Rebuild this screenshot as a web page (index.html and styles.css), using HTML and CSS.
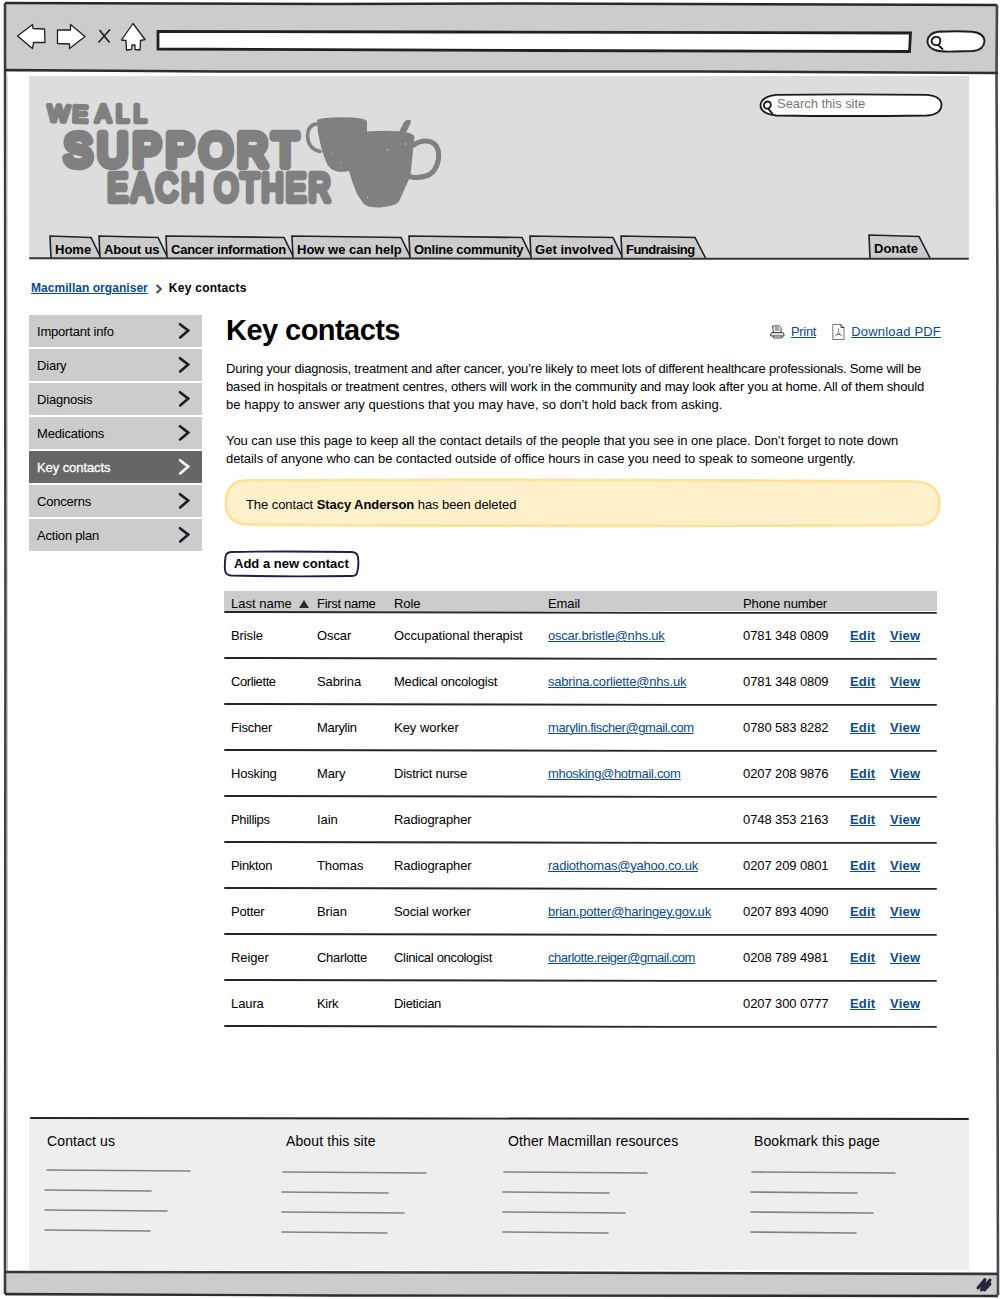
FILE: index.html
```
<!DOCTYPE html>
<html lang="en">
<head>
<meta charset="utf-8">
<title>Key contacts</title>
<link rel="stylesheet" href="styles.css">
</head>
<body>
<svg width="0" height="0" class="defs">
  <symbol id="chev" viewBox="0 0 12 18"><path d="M2 2.2L10.300 8.600L2.200 15.400" fill="none" stroke="currentColor" stroke-width="2.600" stroke-linecap="round"/></symbol>
  <symbol id="glass" viewBox="0 0 13 14"><path d="M5.500 1.600C8 1 9.600 3 9.200 5.400C8.800 7.600 7 8.600 5.200 8.300C3 8 1.800 6.300 2.100 4.500C2.400 2.800 3.500 2 5.500 1.600M7.500 8.300L11 11.500" fill="none" stroke="#16161c" stroke-width="1.500" stroke-linecap="round"/></symbol>
  <symbol id="rule" viewBox="0 0 713 4" preserveAspectRatio="none"><path d="M1 1L150 1.300L450 1.900L712 1.900" fill="none" stroke="#25262e" stroke-width="1.900" stroke-linecap="round"/></symbol>
</svg>
<div class="window">
  <svg class="frame" viewBox="0 0 1000 1299" fill="none">
    <path d="M5 3L330 4L520 3.500L997 5" stroke="#25282c" stroke-width="2.400"/>
    <path d="M5 3L5.500 600L5 1294" stroke="#3a3c42" stroke-width="2.600"/>
    <path d="M7 75L7.500 1271" stroke="#b9b9c4" stroke-width="1"/>
    <path d="M997 5L996.500 72L997.500 300L997 800L998 1295" stroke="#45474c" stroke-width="2.600"/>
    <path d="M4 70L220 71.500L700 71.500L998 73" stroke="#2b2d30" stroke-width="2.600"/>
    <path d="M5 1272L500 1272.500L998 1274" stroke="#34363c" stroke-width="2.600"/>
    <path d="M5 1294L330 1295.500L998 1296" stroke="#2b2d33" stroke-width="2.400"/>
    <path d="M978 1288L985 1279.500L981.500 1290L990 1280L984.500 1290L990 1284" stroke="#25253a" stroke-width="3" stroke-linejoin="round" stroke-linecap="round"/>
  </svg>

  <div class="toolbar">
    <svg class="nav-icons" width="140" height="40" viewBox="0 0 140 40" fill="#fff" stroke="#1f2024" stroke-width="1.300" stroke-linejoin="round">
      <path d="M2.500 18L17.500 6.500L18 10.500L29.500 11L30 24.500L18.500 24.500L17.500 30.500Z"/>
      <path d="M42.500 12L55.500 12L55.500 6.500L70 18.500L54.500 30.500L54.500 26L42.500 25.500Z"/>
      <path d="M84.500 12L94.500 24.500M95 11.500L83.500 24.500" fill="none" stroke-width="1.700"/>
      <path d="M106.500 22L118 5.500L130 21.500L125.500 22.500L125 32L120 31.500L120 27L117 27L116.500 31.500L111.500 32L111 22.500Z"/>
    </svg>
    <svg class="address" width="756" height="24" viewBox="0 0 756 24"><path d="M2 2.500L300 3L754.500 4L753.500 22.500L380 21.500L2 20Z" fill="#fff" stroke="#1f2026" stroke-width="2.800"/></svg>
    <div class="mini-search">
      <svg class="pill" width="60" height="23" viewBox="0 0 60 23"><path d="M12 1.800Q32 .8 46 1.800Q58 3 58.500 11Q58 20 47 21L28 21.500Q15 22 9 20Q1 17 1.500 10.500Q3 3 12 1.800Z" fill="#fff" stroke="#1b1c22" stroke-width="1.900"/></svg>
      <svg class="mag" width="16" height="17"><use href="#glass"/></svg>
    </div>
  </div>

  <div class="page">
    <header class="masthead">
      <div class="brand-row">
        <svg class="logo" width="400" height="112" viewBox="44 98 400 112" fill="#808080" stroke="#808080" stroke-linejoin="round" stroke-linecap="round">
          <g class="lettering">
            <text x="47.500" y="121" font-size="23" stroke-width="4.500" textLength="40" transform="rotate(2 48 121)">WE</text>
            <text x="95.500" y="122" font-size="23" stroke-width="4.500" textLength="51">ALL</text>
            <text transform="translate(64 165.500) scale(.9 1)" font-size="47" stroke-width="8.500" textLength="260">SUPPORT</text>
            <text transform="translate(107.500 201) scale(.8 1)" font-size="38" stroke-width="6.500" textLength="120">EACH</text>
            <text transform="translate(214.500 201) scale(.8 1)" font-size="38" stroke-width="6.500" textLength="145">OTHER</text>
          </g>
          <path stroke="none" d="M317 120Q322 117.500 341 117.300Q364 117.500 367 121L367 131.500Q392 129.500 407 132.500Q414 134 414.500 137L412 160L410.500 176L405 188L399 201.500Q396 206 380 207.500Q366 207.500 363 203L357 194L352 181L349 171Q330 175 325.500 160L322 151L318 133Z"/>
          <path fill="none" stroke-width="3.500" d="M317 124Q308 124.500 307.500 136Q308 149 320 151.500"/>
          <path fill="none" stroke-width="5" d="M414 145Q421 139.500 430 141.500Q440 145 438.500 159Q436 173 426 176Q418 178.500 411 177"/>
          <path stroke="none" d="M399 132L404 122Q408 118.500 411 120.500Q411.500 122 406 132.500Z"/>
          <g fill="#ddd" stroke="none"><circle cx="387.500" cy="150" r=".8"/><circle cx="405.500" cy="144" r=".7"/><circle cx="341" cy="162.500" r=".6"/><circle cx="333" cy="153" r=".5"/><circle cx="367.500" cy="197.500" r=".6"/></g>
        </svg>
        <div class="site-search">
          <svg class="pill" width="184" height="25" viewBox="0 0 184 25"><path d="M17 1.800Q90 .8 168 1.800Q182.500 3 182.500 12Q182 21.500 168 22.500Q90 23.500 17 22.500Q1.500 20.500 1.500 12.500Q2 3.500 17 1.800Z" fill="#fff" stroke="#1b1c22" stroke-width="1.800"/></svg>
          <svg class="mag" width="15" height="17" viewBox="0 0 13 15"><path d="M6.500 2.200C9.200 2 10 4.500 9 6.800C8 9 5 9 3.800 7.500C2.500 5.500 3.500 2.500 6.500 2.200M7.300 8.700L10.600 12.700" fill="none" stroke="#16161c" stroke-width="1.600" stroke-linecap="round"/></svg>
          <span>Search this site</span>
        </div>
      </div>
      <nav class="tabs">
        <a class="tab t1"><svg viewBox="0 0 52 24"><path d="M2 23L1 1L42 2.500L52 23"/></svg><span>Home</span></a>
        <a class="tab t2"><svg viewBox="0 0 70 24"><path d="M2 23L1 1L60 2.500L70 23"/></svg><span>About us</span></a>
        <a class="tab t3"><svg viewBox="0 0 129 24"><path d="M2 23L1 1L119 2.500L129 23"/></svg><span>Cancer information</span></a>
        <a class="tab t4"><svg viewBox="0 0 120 24"><path d="M2 23L1 1L110 2.500L120 23"/></svg><span>How we can help</span></a>
        <a class="tab t5"><svg viewBox="0 0 124 24"><path d="M2 23L1 1L114 2.500L124 23"/></svg><span>Online community</span></a>
        <a class="tab t6"><svg viewBox="0 0 94 24"><path d="M2 23L1 1L84 2.500L94 23"/></svg><span>Get involved</span></a>
        <a class="tab t7"><svg viewBox="0 0 86 24"><path d="M2 23L1 1L75 2.500L85.500 23"/></svg><span>Fundraising</span></a>
        <a class="tab donate"><svg viewBox="0 0 64 24"><path d="M2 24L1 1L51 2.500L62 24"/></svg><span>Donate</span></a>
      </nav>
      <svg class="tabline" width="940" height="3" viewBox="0 0 940 3"><path d="M1 1.200L400 1.600L939 1.800" stroke="#33343c" stroke-width="2" stroke-linecap="round"/></svg>
    </header>

    <div class="crumbs"><a class="link">Macmillan organiser</a><svg width="8" height="10" viewBox="0 0 8 10"><path d="M1.500 1L6 5L1.500 9" fill="none" stroke="#444650" stroke-width="1.900"/></svg><span>Key contacts</span></div>

    <div class="columns">
      <nav class="side">
        <a>Important info<svg width="12" height="18"><use href="#chev"/></svg></a>
        <a>Diary<svg width="12" height="18"><use href="#chev"/></svg></a>
        <a>Diagnosis<svg width="12" height="18"><use href="#chev"/></svg></a>
        <a>Medications<svg width="12" height="18"><use href="#chev"/></svg></a>
        <a class="current">Key contacts<svg width="12" height="18"><use href="#chev"/></svg></a>
        <a>Concerns<svg width="12" height="18"><use href="#chev"/></svg></a>
        <a>Action plan<svg width="12" height="18"><use href="#chev"/></svg></a>
      </nav>

      <main>
        <div class="title-row">
          <h1>Key contacts</h1>
          <div class="actions">
            <svg width="15" height="14" viewBox="0 0 15 14" fill="none" stroke="#43454b" stroke-width="1"><path d="M3.500 7L2.500 1L9 .8L11 2.500L11 7M4.500 3H9M5 5H9.500"/><path d="M1.500 7.500H13L14 9.500V11H.8V9Z" fill="#ddd"/><path d="M3.500 11V13H12V11"/></svg>
            <a class="link print">Print</a>
            <svg width="13" height="16" viewBox="0 0 13 16" fill="none" stroke="#777" stroke-width="1"><path d="M.8.5H9L12 3.500V15.500H.8Z"/><path d="M9 .5V3.500H12" stroke="#333"/><path d="M6.500 4.500V8.500L3 12.500M6.500 8.500L10 12M4 10.500H9"/></svg>
            <a class="link pdf">Download PDF</a>
          </div>
        </div>
        <div class="intro">
          <p><span class="l1">During your diagnosis, treatment and after cancer, you’re likely to meet lots of different healthcare professionals. Some will be</span><br><span class="l2">based in hospitals or treatment centres, others will work in the community and may look after you at home. All of them should</span><br><span class="l3">be happy to answer any questions that you may have, so don’t hold back from asking.</span></p>
          <p><span class="l4">You can use this page to keep all the contact details of the people that you see in one place. Don’t forget to note down</span><br><span class="l5">details of anyone who can be contacted outside of office hours in case you need to speak to someone urgently.</span></p>
        </div>
        <div class="notice">
          <svg class="shape" width="718" height="50" viewBox="0 0 718 50"><path d="M20 2.500Q300 1 690 3.500Q713 4 715.500 22Q716 44 698 47Q400 49 25 46.500Q2 46 2 25Q2 4 20 2.500Z" fill="#fff0cc" stroke="#ffe298" stroke-width="2.700"/></svg>
          <span>The contact <b>Stacy Anderson</b> has been deleted</span>
        </div>
        <a class="add">
          <svg class="shape" width="137" height="28" viewBox="0 0 137 28"><path d="M8 2Q60 1 129 2Q135 2.500 135 8Q136 14 134.500 21Q134 26 129 26Q60 27 8 25.500Q2.500 25 2 20Q1.500 13 2.500 7Q3 2.500 8 2Z" fill="#fff" stroke="#221c4a" stroke-width="1.900"/></svg>
          <span>Add a new contact</span>
        </a>

        <div class="table">
          <div class="row head"><span>Last name <i class="sort"></i></span><span>First name</span><span>Role</span><span>Email</span><span>Phone number</span></div>
          <svg class="rule" width="713" height="4"><use href="#rule"/></svg>
          <div class="row"><span>Brisle</span><span>Oscar</span><span class="wide">Occupational therapist</span><span class="s2"><a class="link">oscar.bristle@nhs.uk</a></span><span>0781 348 0809</span><a class="link act">Edit</a><a class="link act">View</a></div>
          <svg class="rule" width="713" height="4"><use href="#rule"/></svg>
          <div class="row"><span class="s4">Corliette</span><span>Sabrina</span><span class="s2">Medical oncologist</span><span class="s2"><a class="link">sabrina.corliette@nhs.uk</a></span><span>0781 348 0809</span><a class="link act">Edit</a><a class="link act">View</a></div>
          <svg class="rule" width="713" height="4"><use href="#rule"/></svg>
          <div class="row"><span class="s2">Fischer</span><span class="s3">Marylin</span><span class="wide">Key worker</span><span class="s4"><a class="link">marylin.fischer@gmail.com</a></span><span>0780 583 8282</span><a class="link act">Edit</a><a class="link act">View</a></div>
          <svg class="rule" width="713" height="4"><use href="#rule"/></svg>
          <div class="row"><span class="s2">Hosking</span><span>Mary</span><span class="s2">District nurse</span><span class="s3"><a class="link">mhosking@hotmail.com</a></span><span>0207 208 9876</span><a class="link act">Edit</a><a class="link act">View</a></div>
          <svg class="rule" width="713" height="4"><use href="#rule"/></svg>
          <div class="row"><span class="s3">Phillips</span><span>Iain</span><span>Radiographer</span><span></span><span>0748 353 2163</span><a class="link act">Edit</a><a class="link act">View</a></div>
          <svg class="rule" width="713" height="4"><use href="#rule"/></svg>
          <div class="row"><span class="s3">Pinkton</span><span>Thomas</span><span>Radiographer</span><span class="s2"><a class="link">radiothomas@yahoo.co.uk</a></span><span>0207 209 0801</span><a class="link act">Edit</a><a class="link act">View</a></div>
          <svg class="rule" width="713" height="4"><use href="#rule"/></svg>
          <div class="row"><span class="s2">Potter</span><span>Brian</span><span>Social worker</span><span class="s2"><a class="link">brian.potter@haringey.gov.uk</a></span><span>0207 893 4090</span><a class="link act">Edit</a><a class="link act">View</a></div>
          <svg class="rule" width="713" height="4"><use href="#rule"/></svg>
          <div class="row"><span>Reiger</span><span class="s3">Charlotte</span><span class="s3">Clinical oncologist</span><span class="s5"><a class="link">charlotte.reiger@gmail.com</a></span><span>0208 789 4981</span><a class="link act">Edit</a><a class="link act">View</a></div>
          <svg class="rule" width="713" height="4"><use href="#rule"/></svg>
          <div class="row"><span>Laura</span><span class="s3">Kirk</span><span class="s3">Dietician</span><span></span><span>0207 300 0777</span><a class="link act">Edit</a><a class="link act">View</a></div>
          <svg class="rule" width="713" height="4"><use href="#rule"/></svg>
        </div>
      </main>
    </div>

    <footer>
      <svg class="topline" width="940" height="4" viewBox="0 0 940 4"><path d="M2 1L400 1.500L939 2" stroke="#25262e" stroke-width="1.900" stroke-linecap="round"/></svg>
      <div class="foot-cols">
        <section><h2>Contact us</h2><svg width="150" height="66" viewBox="0 0 150 66"><path d="M2 2L145 3M0 22L106 23M0 42L122 43M0 62L105 63"/></svg></section>
        <section><h2>About this site</h2><svg width="150" height="68" viewBox="0 0 150 68"><path d="M-1 4L142 5M-2 24L104 25M-2 44L120 45M-2 64L103 65"/></svg></section>
        <section><h2>Other Macmillan resources</h2><svg width="150" height="68" viewBox="0 0 150 68"><path d="M-2 4L141 5M-3 24L103 25M-3 44L119 45M-3 64L102 65"/></svg></section>
        <section><h2>Bookmark this page</h2><svg width="150" height="68" viewBox="0 0 150 68"><path d="M0 4L143 5M-1 24L105 25M-1 44L121 45M-1 64L104 65"/></svg></section>
      </div>
    </footer>
  </div>
  <div class="statusbar"></div>
</div>
</body>
</html>
```
FILE: styles.css
```
* { box-sizing: border-box; }
body { margin: 0; background: #fff; color: #000; font: 13px/18px "Liberation Sans", Arial, sans-serif; }
svg { display: block; flex: none; }
.defs { position: absolute; }
.window { position: relative; width: 1000px; height: 1299px; display: flex; flex-direction: column; padding: 4px 2px 3px 5px; }
.frame { position: absolute; left: 0; top: 0; width: 1000px; height: 1299px; pointer-events: none; }
.toolbar { height: 68px; background: #ccc; display: flex; align-items: flex-start; padding: 14px 0 0 10px; }
.address { margin: 11px 0 0 2px; }
.nav-icons { margin-right: -1px; }
.mini-search, .site-search { position: relative; }
.mini-search { margin: 12px 0 0 14px; }
.mini-search .mag { position: absolute; left: 3px; top: 5px; }
.page { width: 940px; margin: 4px 0 0 24px; flex: 1; display: flex; flex-direction: column; }
.masthead { background: linear-gradient(#ddd 183px, #fff 183px); height: 184px; display: flex; flex-direction: column; }
.brand-row { flex: none; display: flex; justify-content: space-between; padding: 22px 26px 0 15px; height: 159px; }
.lettering { font-family: "Liberation Sans", Arial, sans-serif; }
.site-search { width: 184px; height: 25px; margin-top: -5px; padding: 2px 0 0 18px; color: #777; letter-spacing: -.04px; }
.site-search .pill { position: absolute; left: 0; top: 0; }
.site-search .mag { position: absolute; left: 1px; top: 6px; }
.site-search span { position: relative; display: block; line-height: 18px; }
.tabs { flex: none; display: flex; height: 22px; padding-left: 20px; }
.tab { position: relative; height: 23px; padding: 6px 0 0 6px; font-weight: bold; line-height: 18px; white-space: nowrap; }
.tab svg { position: absolute; left: 0; top: 0; height: 24px; fill: #ccc; stroke: #20222a; stroke-width: 1.600; }
.tab span { position: relative; }
.t1 { width: 49px; } .t1 svg { width: 52px; }
.t2 { width: 67px; letter-spacing: -.12px; } .t2 svg { width: 70px; }
.t3 { width: 126px; letter-spacing: -.24px; } .t3 svg { width: 129px; }
.t4 { width: 117px; } .t4 svg { width: 120px; }
.t5 { width: 121px; letter-spacing: -.26px; } .t5 svg { width: 124px; }
.t6 { width: 91px; letter-spacing: .04px; } .t6 svg { width: 94px; }
.t7 { width: 86px; letter-spacing: -.52px; } .t7 svg { width: 86px; }
.donate { width: 64px; margin: -1px 0 0 162px; } .donate svg { width: 64px; }
.tabline { position: relative; }
.link { color: #0b4a8c; text-decoration: underline; text-underline-offset: 1px; text-decoration-thickness: 1px; }
.crumbs { display: flex; align-items: center; gap: 7px; height: 18px; margin: 19px 0 0 2px; font-weight: bold; font-size: 12px; }
.crumbs a { letter-spacing: .04px; }
.crumbs span { letter-spacing: .26px; margin-left: -1px; }
.crumbs svg { margin-top: 2px; }
.columns { display: flex; margin-top: 18px; height: 802px; }
.side { width: 173px; display: flex; flex-direction: column; gap: 2px; margin-right: 22px; letter-spacing: -.2px; }
.side a { height: 32px; background: #ccc; display: flex; align-items: center; justify-content: space-between; padding: 1px 12px 0 8px; color: #000; }
.side svg { color: #1b1c28; margin-top: -1px; }
.side .current { background: #666; color: #fff; letter-spacing: -.08px; -webkit-text-stroke: .3px #fff; }
.side .current svg { color: #fff; }
main { width: 718px; }
.title-row { display: flex; justify-content: space-between; height: 32px; padding: 0 1px 0 2px; }
h1 { margin: 0; font-size: 29px; line-height: 30px; font-weight: bold; white-space: nowrap; letter-spacing: -.55px; }
.actions { display: flex; align-items: center; font-size: 13px; padding-top: 1px; }
.print { margin: 0 16px 0 6px; letter-spacing: -.3px; }
.pdf { margin-left: 6px; letter-spacing: .2px; }
.intro { padding: 13px 0 0 2px; white-space: nowrap; }
.intro p { margin: 0 0 18px; }
.l1 { letter-spacing: -.2px; }
.l2 { letter-spacing: -.155px; }
.l3 { letter-spacing: .035px; }
.l4 { letter-spacing: -.05px; }
.l5 { letter-spacing: -.075px; }
.notice { position: relative; height: 50px; margin: -8px 0 0; padding: 18px 0 0 22px; letter-spacing: -.07px; }
.shape { position: absolute; left: 0; top: 0; }
.notice span, .add span { position: relative; }
.add { position: relative; display: block; width: 137px; height: 28px; margin: 22px 0 0 -1px; padding: 5px 0 0 11px; font-weight: bold; white-space: nowrap; }
.table { margin-top: 13px; width: 713px; letter-spacing: -.1px; }
.row { display: grid; grid-template-columns: 86px 77px 154px 195px 107px 40px 40px; padding-left: 7px; height: 42px; align-items: center; white-space: nowrap; }
.head { height: 20px; background: #ccc; align-items: end; }
.head span { height: 16px; line-height: 18px; }
.head span:first-child { letter-spacing: 0; }
.head span:nth-child(2) { letter-spacing: -.3px; }
.sort { display: inline-block; margin-left: 4px; border: 5px solid transparent; border-top: 0; border-bottom: 8px solid #2a2a2a; }
.wide { letter-spacing: -.03px; }
.s2 { letter-spacing: -.21px; }
.s3 { letter-spacing: -.32px; }
.s4 { letter-spacing: -.42px; }
.s5 { letter-spacing: -.47px; }
.act { font-weight: bold; letter-spacing: .2px; }
footer { background: #eee; height: 153px; }
.foot-cols { display: grid; grid-template-columns: 239px 222px 246px 1fr; padding: 11px 0 0 18px; }
h2 { margin: 0; font-size: 14px; line-height: 18px; font-weight: normal; white-space: nowrap; letter-spacing: .12px; }
.foot-cols svg { margin: 18px 0 0 -2px; overflow: visible; stroke: #808284; stroke-width: 1.600; stroke-linecap: round; }
.statusbar { height: 24px; background: #ccc; }
```
